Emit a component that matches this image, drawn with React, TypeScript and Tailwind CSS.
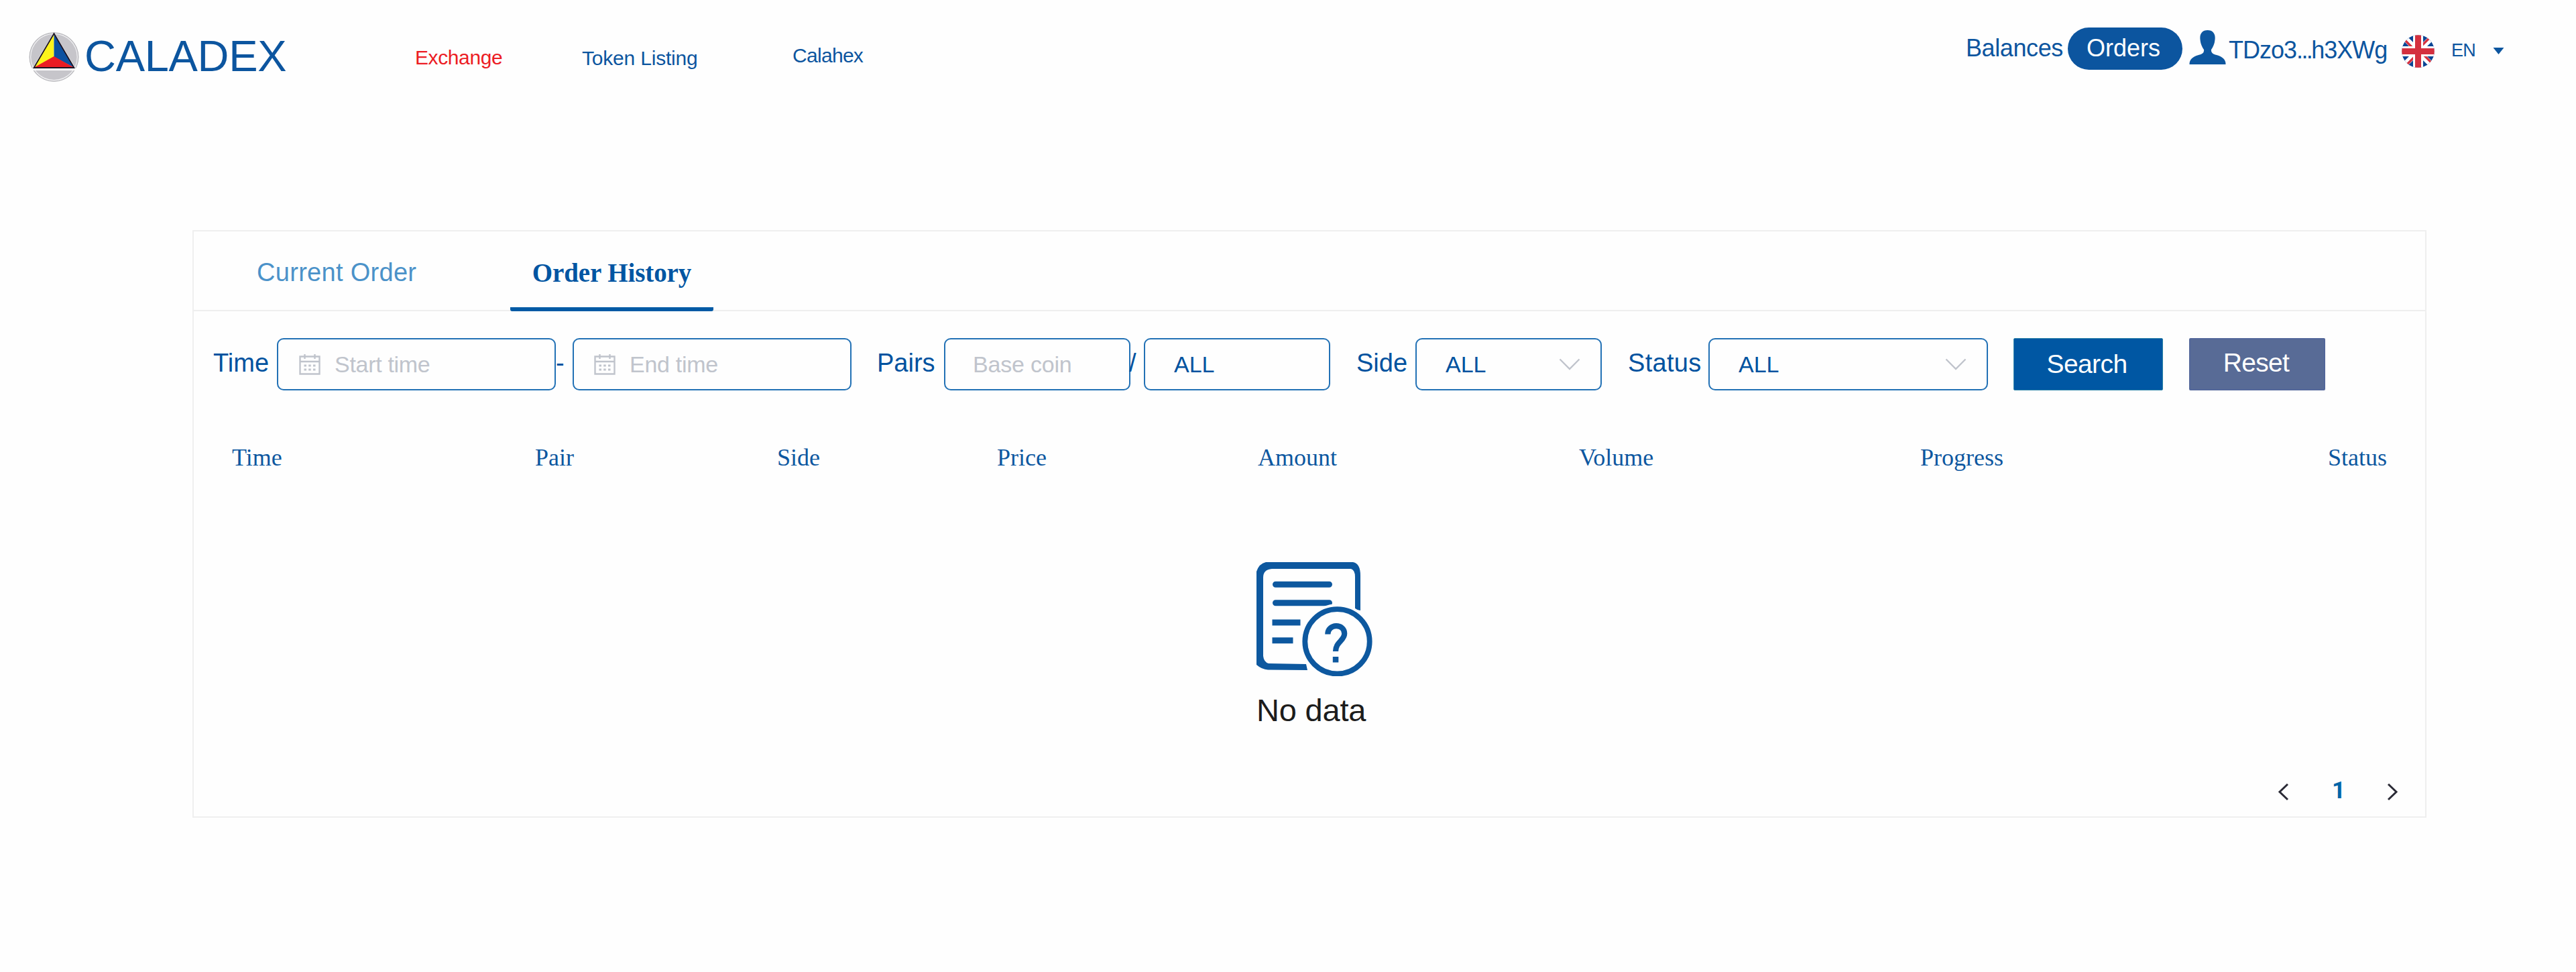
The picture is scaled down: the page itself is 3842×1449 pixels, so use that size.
import React from "react";

function LogoMark() {
  return (
    <svg className="mt-[48px] ml-[43px] h-[74px] w-[75px] shrink-0" viewBox="0 0 75 74">
      <ellipse cx="37.5" cy="37" rx="36.5" ry="36.3" fill="#c6c5ca" stroke="#b4b4b8" strokeWidth="1" />
      <ellipse cx="37.5" cy="37" rx="34.8" ry="34.6" fill="none" stroke="#f1f1f3" strokeWidth="1.2" />
      <path d="M37.5 0 L71 56 H4 Z" fill="#fff" />
      <path d="M3 55.5 H71" stroke="#fff" strokeWidth="3" />
      <path d="M37.5 2 L7 53 L37.5 37 Z" fill="#fdf31b" />
      <path d="M37.5 2 L68 53 L37.5 37 Z" fill="#0b51a0" />
      <path d="M7 53 L37.5 36 L68 53 Z" fill="#ea1c24" />
      <path d="M37.5 2 L67.5 53 H7.5 Z" fill="none" stroke="#1c1423" strokeWidth="1.8" />
    </svg>
  );
}

function Flag() {
  return (
    <svg className="mt-[52px] ml-[23px] h-[49px] w-[49px] shrink-0" viewBox="0 0 49 49">
      <defs>
        <clipPath id="disc">
          <circle cx="24.5" cy="24.5" r="24.3" />
        </clipPath>
      </defs>
      <g clipPath="url(#disc)">
        <rect width="49" height="49" fill="#0a4595" />
        <path d="M0 0 L49 49 M49 0 L0 49" stroke="#fff" strokeWidth="8.5" />
        <path d="M3 6 L22 25 M43 3 L24 22 M46 43 L27 24 M6 46 L25 27" stroke="#d4303f" strokeWidth="3.2" />
        <path d="M24.5 0 V49 M0 24.5 H49" stroke="#fff" strokeWidth="15" />
        <path d="M24.5 0 V49 M0 24.5 H49" stroke="#d4303f" strokeWidth="9" />
      </g>
    </svg>
  );
}

function Calendar() {
  return (
    <svg className="h-[32px] w-[32px] shrink-0" viewBox="0 0 32 32" fill="none" stroke="#c0c4cc" strokeWidth="2.4">
      <path d="M1.5 4.5 H30.5 V30.5 H1.5 Z M1.5 12 H30.5 M8.5 1 V8 M23.5 1 V8" />
      <path d="M7.5 18 H11 M14.2 18 H17.7 M21 18 H24.5 M7.5 24 H11 M14.2 24 H17.7 M21 24 H24.5" strokeWidth="2.8" />
    </svg>
  );
}

function Chevron() {
  return (
    <svg className="h-[18px] w-[32px] shrink-0" viewBox="0 0 32 18" fill="none" stroke="#c0c4cc" strokeWidth="2.4">
      <path d="M1.5 1.5 L16 16 L30.5 1.5" />
    </svg>
  );
}

function NoDataIcon() {
  return (
    <svg className="h-[170px] w-[174px]" viewBox="0 0 174 170">
      <path
        d="M14 0 H144 Q155 2 155 20 V72 L147 70.500 V22 Q147 12 141 10 H23 Q10 11 10 23 V140 Q11 149 18 151 L74 152 L76 161 L17 160.500 Q8 160 0 153 V14 Q4 2 14 0 Z"
        fill="#0d589f"
      />
      <g stroke="#0d589f" strokeWidth="9" strokeLinecap="round">
        <path d="M28.500 33.300 H108.500 M28.500 60.800 H108.500" />
        <path d="M28 90 H61 M28 116.700 H50" strokeLinecap="square" />
      </g>
      <circle cx="120.500" cy="118.300" r="56" fill="#fefefe" />
      <circle cx="120.500" cy="118.300" r="48.200" fill="#fefefe" stroke="#0d589f" strokeWidth="7.800" />
      <path
        d="M106.300 107.500 C106.300 91.500 131.200 91 131.200 106.500 C131.200 117 118 119 118 133"
        fill="none"
        stroke="#0d589f"
        strokeWidth="8.200"
      />
      <rect x="113.800" y="141" width="8.500" height="8.500" fill="#0d589f" />
    </svg>
  );
}

function Field({ className, children }: { className: string; children: React.ReactNode }) {
  return (
    <div
      className={
        "flex h-[78px] shrink-0 items-center rounded-[10px] border-2 border-[#2271b5] bg-[#fefefe] text-[34px] leading-none whitespace-nowrap " +
        className
      }
    >
      {children}
    </div>
  );
}

function Label({ className, children }: { className: string; children: React.ReactNode }) {
  return (
    <span className={"mt-[18px] shrink-0 text-[38px] leading-none whitespace-nowrap " + className}>{children}</span>
  );
}

function Header() {
  return (
    <header className="flex h-[150px] items-start leading-none whitespace-nowrap text-[#0c559f]">
      <LogoMark />
      <span className="mt-[51px] ml-[8px] w-[300px] shrink-0 text-[65px] tracking-[-0.3px]">CALADEX</span>
      <nav className="flex text-[30px]">
        <a className="mt-[71px] ml-[193px] w-[249px] tracking-[-0.4px] text-[#ec1c24]">Exchange</a>
        <a className="mt-[72px] w-[314px] tracking-[-0.2px]">Token Listing</a>
        <a className="mt-[68px] w-[109px] tracking-[-0.7px]">Calahex</a>
      </nav>
      <div className="ml-auto flex w-[910px] items-start text-[36px]">
        <a className="mt-[54px] w-[152px] shrink-0 tracking-[-0.4px]">Balances</a>
        <a className="mt-[41px] flex h-[63px] w-[171px] shrink-0 justify-center rounded-full bg-[#0c559f] pt-[13px] pr-[5px] text-white">
          Orders
        </a>
        <svg className="mt-[45px] ml-[10px] h-[51px] w-[55px] shrink-0" viewBox="0 0 55 51" fill="#0d57a0">
          <path d="M27.500 0 C36 0 39.500 6 38.500 14 C38 21 35 26 33 29 Q32 35 41 37 Q55 41 54.500 51 H0.500 Q0 41 14 37 Q23 35 22 29 C20 26 17 21 16.500 14 C15.500 6 19 0 27.500 0 Z" />
        </svg>
        <span className="mt-[57px] ml-[4px] w-[235px] shrink-0 tracking-[-1px]">
          TDzo3<span className="tracking-[-2.6px]">...</span>h3XWg
        </span>
        <Flag />
        <span className="mt-[62px] ml-[25px] w-[39px] shrink-0 text-[27px] tracking-[-0.8px]">EN</span>
        <svg className="mt-[71px] ml-[23px] h-[10px] w-[17px] shrink-0" viewBox="0 0 17 10" fill="#0c559f">
          <path d="M0.500 0 H16.500 L8.500 10 Z" />
        </svg>
      </div>
    </header>
  );
}

function Filters() {
  return (
    <div className="mt-[40px] flex items-start text-[#00529f]">
      <Label className="ml-[29px] w-[84px]">Time</Label>
      <Field className="ml-[11px] w-[416px] gap-[21px] pl-[31px] tracking-[-0.3px] text-[#c0c4cc]">
        <Calendar />
        <span>Start time</span>
      </Field>
      <Label className="w-[25px]">-</Label>
      <Field className="w-[416px] gap-[21px] pl-[30px] tracking-[-0.3px] text-[#c0c4cc]">
        <Calendar />
        <span>End time</span>
      </Field>
      <Label className="ml-[38px] w-[90px]">Pairs</Label>
      <Field className="ml-[10px] w-[278px] pl-[41px] tracking-[-0.2px] text-[#c0c4cc]">Base coin</Field>
      <Label className="-ml-[2px] w-[22px]">/</Label>
      <Field className="w-[278px] pl-[43px]">ALL</Field>
      <Label className="ml-[39px] w-[80px]">Side</Label>
      <Field className="ml-[8px] w-[278px] justify-between pr-[30px] pl-[43px]">
        <span>ALL</span>
        <Chevron />
      </Field>
      <Label className="ml-[39px] w-[112px] tracking-[0.3px]">Status</Label>
      <Field className="ml-[8px] w-[417px] justify-between pr-[30px] pl-[43px]">
        <span>ALL</span>
        <Chevron />
      </Field>
      <button className="ml-[38px] flex h-[78px] w-[223px] shrink-0 justify-center rounded-[2px] border border-[#2c83a8] bg-[#0057a3] pt-[18px] pr-[4px] text-[39px] leading-none tracking-[-0.6px] text-white">
        Search
      </button>
      <button className="ml-[39px] flex h-[78px] w-[203px] shrink-0 justify-center rounded-[2px] border-2 border-[#53679a] bg-[#586b96] pt-[15px] pr-[3px] text-[39px] leading-none tracking-[-0.7px] text-white">
        Reset
      </button>
    </div>
  );
}

const columns = ["Time", "Pair", "Side", "Price", "Amount", "Volume", "Progress", "Status"];

export default function App() {
  return (
    <div className="h-[1449px] w-[3842px] overflow-hidden bg-[#fefefe] font-['Liberation_Sans',Arial,sans-serif]">
      <Header />
      <main className="mt-[193px] ml-[287px] flex h-[876px] w-[3332px] flex-col border-2 border-[#efefef]">
        <div className="flex h-[119px] shrink-0 items-start border-b-2 border-[#efefef] leading-none whitespace-nowrap">
          <a className="mt-[42px] ml-[94px] w-[378px] text-[38px] tracking-[0.3px] text-[#4b92c9]">Current Order</a>
          <a className="flex h-[119px] w-[303px] justify-center rounded-b-[3px] border-b-[6px] border-[#005aa5] pt-[42px] font-['Liberation_Serif',serif] text-[39px] font-bold tracking-[-0.1px] text-[#0055a2]">
            Order History
          </a>
        </div>
        <Filters />
        <div className="mt-[82px] grid grid-cols-[452px_361px_328px_389px_479px_509px_608px_auto] pl-[57px] font-['Liberation_Serif',serif] text-[36px] leading-none text-[#0d57a0]">
          {columns.map((c) => (
            <span key={c}>{c}</span>
          ))}
        </div>
        <section className="mt-[138px] ml-[1585px] flex w-[174px] flex-col">
          <NoDataIcon />
          <p className="mt-[27px] text-[47px] leading-none tracking-[-0.2px] whitespace-nowrap text-[#1c1c1c]">No data</p>
        </section>
        <div className="mt-auto flex h-[78px] items-start justify-end pr-[40px]">
          <svg className="mt-[28px] h-[27px] w-[17px]" viewBox="0 0 17 27" fill="none" stroke="#2a2a35" strokeWidth="3">
            <path d="M15 2 L3 13.500 L15 25" />
          </svg>
          <span className="mt-[22px] ml-[64px] w-[19px] font-['Roboto',sans-serif] text-[35px] leading-none font-bold text-[#0065a8]">
            1
          </span>
          <svg className="mt-[28px] ml-[63px] h-[27px] w-[17px]" viewBox="0 0 17 27" fill="none" stroke="#2a2a35" strokeWidth="3">
            <path d="M2 2 L14 13.500 L2 25" />
          </svg>
        </div>
      </main>
    </div>
  );
}
